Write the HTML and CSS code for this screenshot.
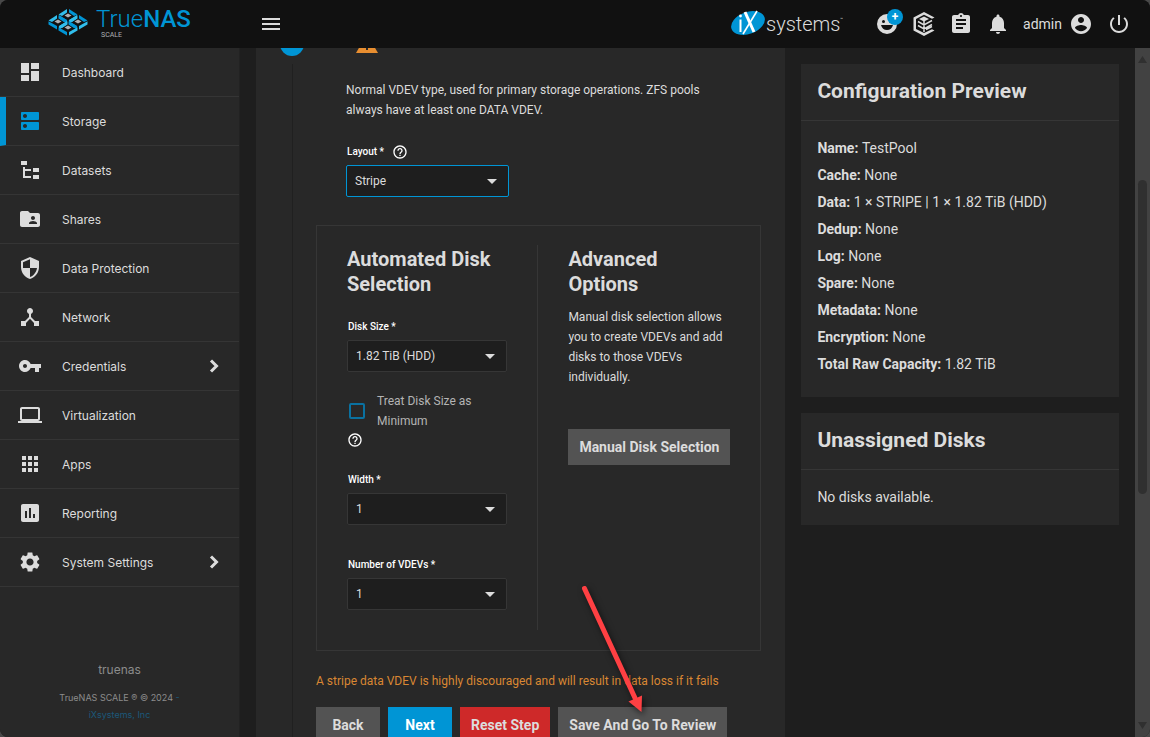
FILE: index.html
```
<!DOCTYPE html>
<html lang="en">
<head>
    <meta charset="UTF-8">
    <meta name="viewport" content="width=device-width, initial-scale=1.0">
    <title>TrueNAS - Pool Manager</title>
    <link rel="stylesheet" href="styles.css">
</head>
<body>
    <div class="app">
        <header class="topbar">
            <a class="brand" href="#" aria-label="TrueNAS SCALE">
                <svg class="brand-mark" viewBox="0 0 40 28" aria-hidden="true">
                    <defs>
                        <g id="tray">
                            <path fill="#31beec" d="M-9.500 0L-1-5.500v3.500L-6 1.500z"/>
                            <path fill="#0095d5" d="M1-5.500L9.500 0 6 1.500 1-2z"/>
                            <path fill="#0095d5" d="M-9.500 .8L-1 5.500v3.500l-8.500-5z"/>
                            <path fill="#31beec" d="M9.500 .8L1 5.500v3.500l8.500-5z"/>
                            <path fill="#aeb0b3" d="M0-1L3.500 1 0 3-3.500 1z"/>
                        </g>
                    </defs>
                    <use href="#tray" x="20" y="6.500"/>
                    <use href="#tray" x="10" y="12.500"/>
                    <use href="#tray" x="30" y="12.500"/>
                    <use href="#tray" x="20" y="18.500"/>
                </svg>
                <span class="brand-text">
                    <span class="brand-name">True<b>NAS</b></span>
                    <span class="brand-edition">SCALE</span>
                </span>
            </a>
            <button class="icon-button menu-toggle" aria-label="Toggle menu">
                <svg viewBox="0 0 24 24"><path d="M3 6h18v2H3V6m0 5h18v2H3v-2m0 5h18v2H3v-2z"/></svg>
            </button>
            <a class="vendor" href="#" aria-label="iXsystems">
                <svg viewBox="0 0 114 30" aria-hidden="true">
                    <ellipse cx="17" cy="14" rx="17.500" ry="11" fill="#0095d5" transform="rotate(-20 17 14)"/>
                    <path stroke="#fff" stroke-width="2" fill="none" d="M9.500 10.500V23"/>
                    <circle cx="9.500" cy="7" r="1.400" fill="#fff"/>
                    <path stroke="#fff" stroke-width="3" fill="none" d="M14 3l9 20"/>
                    <path stroke="#fff" stroke-width="1.600" fill="none" d="M26 2L12 25"/>
                    <text class="vendor-text" x="35" y="22">systems</text>
                    <text class="vendor-tm" x="109" y="12">™</text>
                </svg>
            </a>
            <nav class="actions">
                <button class="icon-button feedback" aria-label="Send feedback">
                    <svg viewBox="0 0 24 24"><path fill-rule="evenodd" d="M12 2a10 10 0 1 0 0 20 10 10 0 0 0 0-20zM8.500 8a1.500 1.500 0 1 1 0 3 1.500 1.500 0 0 1 0-3zm7 0a1.500 1.500 0 1 1 0 3 1.500 1.500 0 0 1 0-3zM6 13h12c-.7 3-3 5-6 5s-5.300-2-6-5z"/></svg>
                    <span class="badge">+</span>
                </button>
                <button class="icon-button" aria-label="TrueCommand">
                    <svg viewBox="0 0 24 24">
                        <path d="M12 0l10.500 5.500-2.500 1.300L12 2.800 4 7v10l8 4 8-3.800 2.500 1.300L12 24 1.500 18.500v-13z"/>
                        <path d="M12 4.500l5 2.500-5 2.500L7 7z"/>
                        <path fill="none" stroke="#dcdcdc" stroke-width="1.500" d="M12 9v11M6 9.500l6 3.300 8-4.300M6 13.500l6 3.300 8-4.300M14 17.500l6-3"/>
                    </svg>
                </button>
                <button class="icon-button" aria-label="Jobs">
                    <svg viewBox="0 0 24 24"><path d="M19 3h-4.180C14.400 1.840 13.300 1 12 1c-1.300 0-2.400.84-2.820 2H5c-1.100 0-2 .9-2 2v14c0 1.100.9 2 2 2h14c1.100 0 2-.9 2-2V5c0-1.100-.9-2-2-2zm-7 0c.55 0 1 .45 1 1s-.45 1-1 1-1-.45-1-1 .45-1 1-1zm2 14H7v-2h7v2zm3-4H7v-2h10v2zm0-4H7V7h10v2z"/></svg>
                </button>
                <button class="icon-button" aria-label="Alerts">
                    <svg viewBox="0 0 24 24"><path d="M12 22c1.100 0 2-.9 2-2h-4c0 1.100.89 2 2 2zm6-6v-5c0-3.070-1.640-5.640-4.500-6.320V4c0-.83-.67-1.500-1.500-1.500s-1.500.67-1.500 1.500v.68C7.630 5.360 6 7.920 6 11v5l-2 2v1h16v-1l-2-2z"/></svg>
                </button>
                <button class="icon-button account">
                    <span>admin</span>
                    <svg viewBox="0 0 24 24"><path d="M12 2C6.480 2 2 6.480 2 12s4.480 10 10 10 10-4.480 10-10S17.520 2 12 2zm0 3c1.660 0 3 1.340 3 3s-1.340 3-3 3-3-1.340-3-3 1.340-3 3-3zm0 14.200c-2.500 0-4.710-1.280-6-3.220.03-1.990 4-3.080 6-3.080 1.990 0 5.970 1.090 6 3.080-1.290 1.940-3.500 3.220-6 3.220z"/></svg>
                </button>
                <button class="icon-button" aria-label="Power">
                    <svg viewBox="0 0 24 24"><path d="M13 3h-2v10h2V3zm4.830 2.170l-1.420 1.420C17.990 7.860 19 9.810 19 12c0 3.870-3.130 7-7 7s-7-3.130-7-7c0-2.190 1.010-4.140 2.580-5.420L6.170 5.170C4.230 6.820 3 9.260 3 12c0 4.970 4.030 9 9 9s9-4.030 9-9c0-2.740-1.230-5.180-3.170-6.830z"/></svg>
                </button>
            </nav>
        </header>

        <div class="layout">
            <aside class="sidebar">
                <nav class="menu">
                    <a class="menu-item" href="#">
                        <svg viewBox="0 0 24 24"><path d="M13 3v6h8V3m-8 18h8V11h-8M3 21h8v-6H3m0-2h8V3H3v10z"/></svg>
                        <span>Dashboard</span>
                    </a>
                    <a class="menu-item active" href="#">
                        <svg viewBox="0 0 24 24"><path d="M20 13H4c-.55 0-1 .45-1 1v6c0 .55.45 1 1 1h16c.55 0 1-.45 1-1v-6c0-.55-.45-1-1-1zM7 19c-1.100 0-2-.9-2-2s.9-2 2-2 2 .9 2 2-.9 2-2 2zM20 3H4c-.55 0-1 .45-1 1v6c0 .55.45 1 1 1h16c.55 0 1-.45 1-1V4c0-.55-.45-1-1-1zM7 9c-1.100 0-2-.9-2-2s.9-2 2-2 2 .9 2 2-.9 2-2 2z"/></svg>
                        <span>Storage</span>
                    </a>
                    <a class="menu-item" href="#">
                        <svg viewBox="0 0 24 24"><path d="M3 3h6v4H3V3m12 7h6v4h-6v-4m0 7h6v4h-6v-4m-2-4H7v5h6v2H5V9h2v2h6v2z"/></svg>
                        <span>Datasets</span>
                    </a>
                    <a class="menu-item" href="#">
                        <svg viewBox="0 0 24 24"><path d="M20 6h-8l-2-2H4c-1.100 0-1.990.9-1.990 2L2 18c0 1.100.9 2 2 2h16c1.100 0 2-.9 2-2V8c0-1.100-.9-2-2-2zm-5 3c1.100 0 2 .9 2 2s-.9 2-2 2-2-.9-2-2 .9-2 2-2zm4 8h-8v-1c0-1.330 2.670-2 4-2s4 .67 4 2v1z"/></svg>
                        <span>Shares</span>
                    </a>
                    <a class="menu-item" href="#">
                        <svg viewBox="0 0 24 24"><path d="M12 1L3 5v6c0 5.550 3.840 10.740 9 12 5.160-1.260 9-6.450 9-12V5l-9-4zm0 10.990h7c-.53 4.120-3.280 7.790-7 8.940V12H5V6.300l7-3.110v8.800z"/></svg>
                        <span>Data Protection</span>
                    </a>
                    <a class="menu-item" href="#">
                        <svg viewBox="0 0 24 24"><path d="M17 16l-4-4V8.820C14.160 8.400 15 7.300 15 6c0-1.660-1.340-3-3-3S9 4.340 9 6c0 1.300.84 2.400 2 2.820V12l-4 4H3v5h5v-3.050l4-4.200 4 4.200V21h5v-5h-4z"/></svg>
                        <span>Network</span>
                    </a>
                    <a class="menu-item" href="#">
                        <svg viewBox="0 0 24 24"><path d="M12.650 10C11.830 7.670 9.610 6 7 6c-3.310 0-6 2.690-6 6s2.690 6 6 6c2.610 0 4.830-1.670 5.650-4H17v4h4v-4h2v-4H12.650zM7 14c-1.100 0-2-.9-2-2s.9-2 2-2 2 .9 2 2-.9 2-2 2z"/></svg>
                        <span>Credentials</span>
                        <svg class="chevron" viewBox="0 0 24 24"><path d="M9 6.500l5.500 5.500L9 17.500"/></svg>
                    </a>
                    <a class="menu-item" href="#">
                        <svg viewBox="0 0 24 24"><path d="M20 18c1.100 0 1.990-.9 1.990-2L22 6c0-1.100-.9-2-2-2H4c-1.100 0-2 .9-2 2v10c0 1.100.9 2 2 2H0v2h24v-2h-4zM4 6h16v10H4V6z"/></svg>
                        <span>Virtualization</span>
                    </a>
                    <a class="menu-item" href="#">
                        <svg viewBox="0 0 24 24"><path d="M4 8h4V4H4v4zm6 12h4v-4h-4v4zm-6 0h4v-4H4v4zm0-6h4v-4H4v4zm6 0h4v-4h-4v4zm6-10v4h4V4h-4zm-6 4h4V4h-4v4zm6 6h4v-4h-4v4zm0 6h4v-4h-4v4z"/></svg>
                        <span>Apps</span>
                    </a>
                    <a class="menu-item" href="#">
                        <svg viewBox="0 0 24 24"><path d="M19 3H5c-1.100 0-2 .9-2 2v14c0 1.100.9 2 2 2h14c1.100 0 2-.9 2-2V5c0-1.100-.9-2-2-2zM9 17H7v-7h2v7zm4 0h-2V7h2v10zm4 0h-2v-4h2v4z"/></svg>
                        <span>Reporting</span>
                    </a>
                    <a class="menu-item" href="#">
                        <svg viewBox="0 0 24 24"><path d="M19.140 12.940c.04-.3.06-.61.06-.94 0-.32-.02-.64-.07-.94l2.030-1.580c.18-.14.23-.41.12-.61l-1.920-3.320c-.12-.22-.37-.29-.59-.22l-2.390.96c-.5-.38-1.030-.7-1.620-.94l-.36-2.540c-.04-.24-.24-.41-.48-.41h-3.840c-.24 0-.43.17-.47.41l-.36 2.540c-.59.24-1.130.57-1.620.94l-2.390-.96c-.22-.08-.47 0-.59.22L2.740 8.870c-.12.21-.08.47.12.61l2.030 1.580c-.05.3-.09.63-.09.94s.02.64.07.94l-2.030 1.580c-.18.14-.23.41-.12.61l1.920 3.320c.12.22.37.29.59.22l2.390-.96c.5.38 1.030.7 1.620.94l.36 2.540c.05.24.24.41.48.41h3.840c.24 0 .44-.17.47-.41l.36-2.540c.59-.24 1.130-.56 1.620-.94l2.390.96c.22.08.47 0 .59-.22l1.920-3.320c.12-.22.07-.47-.12-.61l-2.010-1.580zM12 15.600c-1.980 0-3.600-1.620-3.600-3.600s1.620-3.600 3.600-3.600 3.600 1.620 3.600 3.600-1.620 3.600-3.600 3.600z"/></svg>
                        <span>System Settings</span>
                        <svg class="chevron" viewBox="0 0 24 24"><path d="M9 6.500l5.500 5.500L9 17.500"/></svg>
                    </a>
                </nav>
                <footer class="sidebar-footer">
                    <p class="hostname">truenas</p>
                    <p class="copyright">TrueNAS SCALE ® © 2024 <a href="#">-<br>iXsystems, Inc</a></p>
                </footer>
            </aside>

            <main class="content">
                <section class="wizard">
                    <div class="step-header">
                        <span class="step-number"></span>
                        <svg class="step-warning" viewBox="0 0 22 19" aria-hidden="true"><path fill="#e88e30" d="M11 0L0 19h22z"/><path fill="#282828" d="M10 7h2v5h-2zm0 7h2v2h-2z"/></svg>
                    </div>
                    <form class="step-body">
                        <p class="intro">Normal VDEV type, used for primary storage operations. ZFS pools always have at least one DATA VDEV.</p>
                        <div class="field layout-field">
                            <div class="field-label">
                                <label for="layout">Layout *</label>
                                <svg class="help" viewBox="0 0 24 24"><path d="M11 18h2v-2h-2v2zm1-16C6.480 2 2 6.480 2 12s4.480 10 10 10 10-4.480 10-10S17.520 2 12 2zm0 18c-4.410 0-8-3.590-8-8s3.590-8 8-8 8 3.590 8 8-3.590 8-8 8zm0-14c-2.210 0-4 1.790-4 4h2c0-1.100.9-2 2-2s2 .9 2 2c0 2-3 1.750-3 5h2c0-2.250 3-2.500 3-5 0-2.210-1.790-4-4-4z"/></svg>
                            </div>
                            <div class="select focused">
                                <select id="layout"><option>Stripe</option></select>
                            </div>
                        </div>

                        <div class="selection">
                            <div class="column">
                                <h2>Automated Disk Selection</h2>
                                <div class="field">
                                    <div class="field-label"><label for="disk-size">Disk Size *</label></div>
                                    <div class="select">
                                        <select id="disk-size"><option>1.82 TiB (HDD)</option></select>
                                    </div>
                                </div>
                                <div class="check">
                                    <input type="checkbox" id="minimum">
                                    <label for="minimum">Treat Disk Size as Minimum</label>
                                </div>
                                <svg class="help" viewBox="0 0 24 24"><path d="M11 18h2v-2h-2v2zm1-16C6.480 2 2 6.480 2 12s4.480 10 10 10 10-4.480 10-10S17.520 2 12 2zm0 18c-4.410 0-8-3.590-8-8s3.590-8 8-8 8 3.590 8 8-3.590 8-8 8zm0-14c-2.210 0-4 1.790-4 4h2c0-1.100.9-2 2-2s2 .9 2 2c0 2-3 1.750-3 5h2c0-2.250 3-2.500 3-5 0-2.210-1.790-4-4-4z"/></svg>
                                <div class="field width-field">
                                    <div class="field-label"><label for="width">Width *</label></div>
                                    <div class="select">
                                        <select id="width"><option>1</option></select>
                                    </div>
                                </div>
                                <div class="field vdevs-field">
                                    <div class="field-label"><label for="vdevs">Number of VDEVs *</label></div>
                                    <div class="select">
                                        <select id="vdevs"><option>1</option></select>
                                    </div>
                                </div>
                            </div>
                            <div class="column">
                                <h2>Advanced Options</h2>
                                <p>Manual disk selection allows you to create VDEVs and add disks to those VDEVs individually.</p>
                                <button type="button" class="button">Manual Disk Selection</button>
                            </div>
                        </div>

                        <p class="warning">A stripe data VDEV is highly discouraged and will result in data loss if it fails</p>
                        <div class="buttons">
                            <button type="button" class="button">Back</button>
                            <button type="button" class="button primary">Next</button>
                            <button type="button" class="button danger">Reset Step</button>
                            <button type="button" class="button">Save And Go To Review</button>
                        </div>
                    </form>
                </section>

                <div class="side">
                    <section class="card">
                        <h3>Configuration Preview</h3>
                        <dl>
                            <div><dt>Name:</dt> <dd>TestPool</dd></div>
                            <div><dt>Cache:</dt> <dd>None</dd></div>
                            <div><dt>Data:</dt> <dd>1 × STRIPE | 1 × 1.82 TiB (HDD)</dd></div>
                            <div><dt>Dedup:</dt> <dd>None</dd></div>
                            <div><dt>Log:</dt> <dd>None</dd></div>
                            <div><dt>Spare:</dt> <dd>None</dd></div>
                            <div><dt>Metadata:</dt> <dd>None</dd></div>
                            <div><dt>Encryption:</dt> <dd>None</dd></div>
                            <div><dt>Total Raw Capacity:</dt> <dd>1.82 TiB</dd></div>
                        </dl>
                    </section>
                    <section class="card">
                        <h3>Unassigned Disks</h3>
                        <p>No disks available.</p>
                    </section>
                </div>
            </main>

            <div class="scrollbar" aria-hidden="true">
                <svg viewBox="0 0 9 7"><path d="M4.500 0L9 7H0z"/></svg>
                <div class="track"><div class="thumb"></div></div>
                <svg viewBox="0 0 9 7"><path d="M4.500 7L9 0H0z"/></svg>
            </div>
        </div>

        <svg class="pointer" viewBox="0 0 80 142" aria-hidden="true">
            <path d="M13.500 17.500L64 127" fill="none" stroke="#ff4043" stroke-width="5" stroke-linecap="round"/>
            <path d="M57.500 130.500L71 124.500 70.500 141z" fill="#ff4043"/>
        </svg>
    </div>
</body>
</html>
```
FILE: styles.css
```
* {
    box-sizing: border-box;
}
body {
    margin: 0;
    background-color: #484848;
    color: #dcdcdc;
    font-family: Roboto, "Liberation Sans", sans-serif;
    font-size: 12px;
    line-height: 20px;
}
h2, h3, p, dl, dd {
    margin: 0;
}
a {
    color: inherit;
    text-decoration: none;
}
svg {
    display: block;
    flex: none;
    fill: currentColor;
}
.app {
    position: relative;
    display: flex;
    flex-direction: column;
    height: 100vh;
    overflow: hidden;
    border-radius: 8px;
    background-color: #1e1e1e;
}

/* top bar */
.topbar {
    display: flex;
    align-items: center;
    flex: none;
    height: 48px;
    padding-right: 19px;
    background-color: #111;
}
.brand {
    display: flex;
    gap: 8px;
    width: 240px;
    height: 48px;
    padding: 8px 0 0 48px;
}
.brand-mark {
    width: 40px;
    height: 28px;
}
.brand-text {
    display: flex;
    flex-direction: column;
    color: #0095d5;
}
.brand-name {
    font-size: 24px;
    font-weight: 300;
    line-height: 23px;
}
.brand-name b {
    font-weight: 500;
}
.brand-edition {
    padding-left: 5px;
    color: #aeb0b3;
    font-size: 7px;
    line-height: 8px;
}
.icon-button {
    position: relative;
    display: flex;
    align-items: center;
    padding: 0;
    border: none;
    background: none;
    color: #dcdcdc;
    font-family: inherit;
    font-size: 14px;
    cursor: pointer;
}
.icon-button svg {
    width: 24px;
    height: 24px;
}
.menu-toggle {
    margin-left: 19px;
}
.vendor {
    margin-left: auto;
}
.vendor svg {
    width: 114px;
    height: 30px;
}
.vendor-text {
    fill: #dcdcdc;
    font-size: 20px;
    font-weight: 300;
}
.vendor-tm {
    fill: #dcdcdc;
    font-size: 5px;
}
.actions {
    display: flex;
    gap: 13px;
    margin-left: 30px;
}
.badge {
    position: absolute;
    top: -3px;
    right: -4px;
    width: 16px;
    height: 16px;
    border-radius: 50%;
    background-color: #0095d5;
    color: #fff;
    font-size: 12px;
    font-weight: 700;
    line-height: 16px;
    text-align: center;
}
.account {
    gap: 7px;
    padding-right: 1px;
}

/* sidebar */
.layout {
    display: flex;
    flex: 1;
    min-height: 0;
}
.sidebar {
    display: flex;
    flex-direction: column;
    justify-content: space-between;
    flex: none;
    width: 240px;
    background-color: #282828;
    border-right: 1px solid #222;
    font-family: Inter, "Open Sans", sans-serif;
}
.menu-item {
    display: flex;
    align-items: center;
    gap: 20px;
    height: 49px;
    padding: 0 13px 0 18px;
    border-bottom: 1px solid #353535;
}
.menu-item svg {
    width: 24px;
    height: 24px;
}
.menu-item span {
    padding-top: 2px;
}
.menu-item.active {
    padding-left: 12px;
    border-left: 6px solid #0095d5;
}
.menu-item.active svg {
    color: #0095d5;
}
.menu-item .chevron {
    margin-left: auto;
    fill: none;
    stroke: currentColor;
    stroke-width: 3;
}
.sidebar-footer {
    padding-bottom: 14px;
    color: #8c8c8c;
    text-align: center;
}
.hostname {
    margin-bottom: 9px;
}
.copyright {
    font-size: 9px;
    line-height: 17px;
}
.copyright a {
    color: #1b587a;
}

/* wizard */
.content {
    display: grid;
    grid-template-columns: 5fr 3fr;
    gap: 16px;
    flex: 1;
    min-width: 0;
    padding: 0 16px;
    overflow: hidden;
}
.wizard {
    background-color: #282828;
}
.step-header {
    display: flex;
    align-items: flex-end;
    gap: 52px;
    height: 8px;
    padding-left: 24px;
    overflow: hidden;
}
.step-number {
    width: 24px;
    height: 24px;
    border-radius: 50%;
    background-color: #0095d5;
}
.step-warning {
    width: 22px;
    height: 19px;
    margin-bottom: 3px;
}
.step-body {
    margin: 8px 24px 0 36px;
    padding: 16px 0 24px 23px;
    border-left: 1px solid #202020;
}
.intro {
    padding: 0 30px;
}
.field-label {
    display: flex;
    align-items: center;
    gap: 8px;
    height: 16px;
    margin-bottom: 5px;
    padding-left: 1px;
    color: #fff;
    font-size: 10px;
    font-weight: 500;
}
.help {
    width: 16px;
    height: 16px;
    color: #fff;
}
.select {
    position: relative;
}
.select::after {
    content: "";
    position: absolute;
    top: 14px;
    right: 12px;
    border: 5px solid transparent;
    border-top-color: #dcdcdc;
    border-bottom: none;
    pointer-events: none;
}
.select select {
    display: block;
    width: 100%;
    height: 32px;
    padding: 0 24px 0 8px;
    border: 1px solid #363636;
    border-radius: 2px;
    background-color: #1e1e1e;
    color: #dcdcdc;
    font-family: inherit;
    font-size: 12px;
    appearance: none;
}
.select.focused select {
    border-color: #0095d5;
}
.layout-field {
    width: 163px;
    margin: 24px 0 28px 30px;
}
.selection {
    display: grid;
    grid-template-columns: 1fr 1fr;
    padding: 19px 0 20px;
    border: 1px solid #363636;
}
.column {
    padding: 2px 30px 20px;
}
.column:first-child {
    border-right: 1px solid #363636;
}
.column h2 {
    margin-bottom: 22px;
    font-size: 20px;
    font-weight: 700;
    line-height: 25px;
}
.column p {
    margin: -12px 0 42px;
}
.check {
    display: flex;
    align-items: center;
    gap: 12px;
    margin: 19px 0 1px;
    padding-left: 2px;
    color: #b4b4b4;
}
.check input {
    flex: none;
    width: 16px;
    height: 16px;
    margin: 0;
    border: 2px solid #0a71a0;
    border-radius: 2px;
    appearance: none;
}
.width-field {
    margin-top: 24px;
}
.vdevs-field {
    margin-top: 32px;
}
.button {
    min-width: 64px;
    height: 36px;
    padding: 0 11px;
    border: none;
    background-color: #535353;
    color: #dcdcdc;
    font-family: inherit;
    font-size: 14px;
    font-weight: 700;
    white-space: nowrap;
    cursor: pointer;
}
.button.primary {
    background-color: #0095d5;
    color: #fff;
}
.button.danger {
    background-color: #ce2929;
}
.warning {
    margin: 20px 0 16px;
    color: #d98733;
}
.buttons {
    display: flex;
    gap: 8px;
}

/* right column */
.side {
    display: flex;
    flex-direction: column;
    gap: 16px;
    padding-top: 16px;
}
.card {
    background-color: #282828;
    font-size: 14px;
    line-height: 27px;
}
.card h3 {
    padding: 14px 16px 15px;
    border-bottom: 1px solid #363636;
    font-size: 21px;
    font-weight: 700;
}
.card dl {
    padding: 14px 16px 19px;
}
.card p {
    padding: 14px 16px;
}
.card dt {
    display: inline;
    font-weight: 700;
}
.card dd {
    display: inline;
}

/* scroll track at the window edge */
.scrollbar {
    display: flex;
    flex-direction: column;
    align-items: center;
    flex: none;
    width: 15px;
    padding: 8px 0;
    background-color: #424242;
    color: #303030;
}
.scrollbar svg {
    width: 9px;
    height: 7px;
}
.track {
    flex: 1;
    padding-top: 117px;
}
.thumb {
    width: 9px;
    height: 58%;
    border-radius: 5px;
    background-color: #303030;
}

/* red arrow over the page */
.pointer {
    position: absolute;
    top: 571px;
    left: 571px;
    width: 80px;
    height: 142px;
    filter: drop-shadow(2px 3px 3px rgba(0, 0, 0, 0.6));
}
```
